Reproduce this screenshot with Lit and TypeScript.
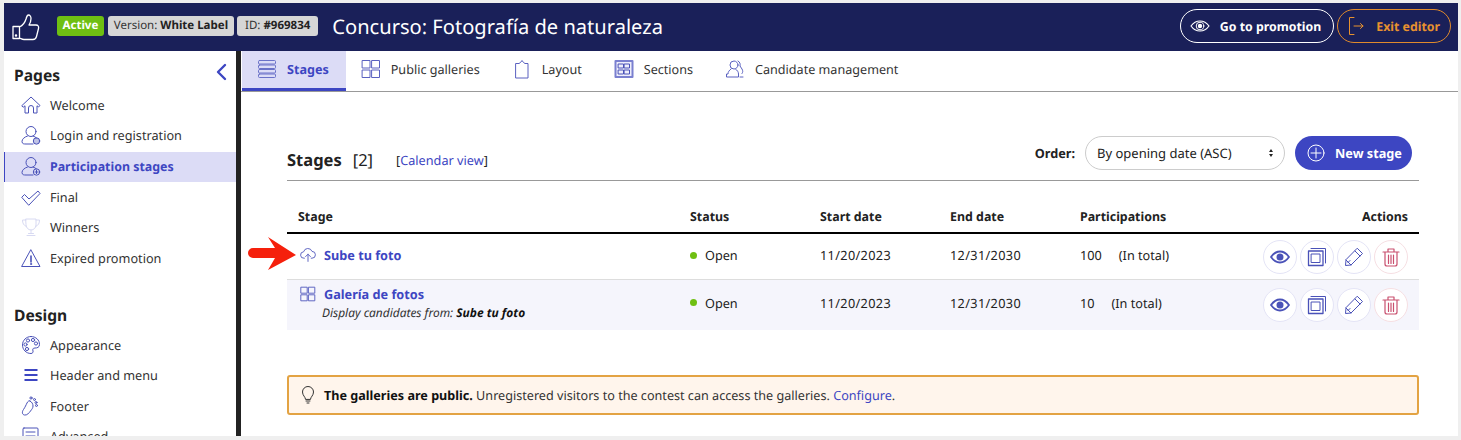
import { LitElement, html, css, svg } from "lit";
import { customElement } from "lit/decorators.js";

const ic = (w: number, h: number, c: string, body: unknown, sw = 1) => html`<svg class="ic" width=${w} height=${h} viewBox="0 0 ${w} ${h}" fill="none" stroke=${c} stroke-width=${sw} stroke-linecap="round" stroke-linejoin="round">${body}</svg>`;
const B = "#4a52b8";

const icons: Record<string, unknown> = {
  home: ic(20, 20, B, svg`<path d="M1 10.500 10 2l9 8.500-1.500 1.500-1.500-1.200V18h-3.500v-5a2.500 2.500 0 0 0-5 0v5H4v-7.200L2.500 12z"/>`),
  login: ic(20, 20, B, svg`<circle cx="10" cy="6.500" r="5"/><path d="M6.500 11C3.500 12 1 14 1 16.500S3 19 5 19h7"/><path d="M12 11c1.500.5 2.500 1 3.500 2"/><circle cx="15.500" cy="16" r="3.200" fill=${B} fill-opacity=".35"/>`),
  part: ic(20, 20, B, svg`<circle cx="10" cy="6.500" r="5"/><path d="M6.500 11C3.500 12 1 14 1 16.500S3 19 5 19h7"/><path d="M12 11c1.500.5 2.500 1 3.500 2"/><circle cx="15.500" cy="16" r="3.200"/><path d="M15.500 14.400v3.200M13.900 16h3.200"/>`),
  final: ic(20, 20, B, svg`<path d="M1 10 3.500 7.500 8 12l9-8 2 2.500L8 18z"/>`),
  trophy: ic(20, 20, "#d8daf2", svg`<path d="M5 2h10v6a5 5 0 0 1-10 0zM5 3H1.500c0 3 1 5.500 4 6.500M15 3h3.500c0 3-1 5.500-4 6.500M10 13v3M6 18.500h8M7.500 16.500h5"/>`),
  warn: ic(20, 20, B, svg`<path d="M10 2 19 18.500H1z"/><path d="M10 8v6" stroke-width="1.600"/><circle cx="10" cy="16" r=".6"/>`),
  palette: ic(20, 20, B, svg`<path d="M10 1.500c5 0 8.500 3.500 8.500 8 0 3-2.500 3.500-4.500 3.500-2.500 0-2.500 1.500-2 3 .4 1.200-.5 2.500-2 2.500C5 18.500 1.500 14.500 1.500 10S5 1.500 10 1.500z"/><circle cx="7" cy="5.500" r="1.600"/><circle cx="12" cy="5" r="1.600"/><circle cx="15" cy="8.500" r="1.600"/><circle cx="4.500" cy="9.500" r="1.600"/><circle cx="6" cy="14" r="1.600"/>`),
  menu: ic(20, 20, "#3d46c2", svg`<path d="M3.500 5h13M3.500 10h13M3.500 15h13" stroke-width="2" stroke-linecap="butt"/>`),
  foot: ic(20, 20, B, svg`<path d="M9 5c2 1 3 3 3 5 0 2-1 3-2.500 5S6 19.500 3.500 19 .8 16 2.500 13.500 5 9 6 7s2-2.500 3-2z"/><circle cx="10" cy="2" r="1.100"/><circle cx="13.500" cy="3.500" r="1"/><circle cx="15" cy="6.500" r="1"/><circle cx="15.500" cy="9.500" r="1"/>`),
  adv: ic(20, 20, B, svg`<rect x="2" y="2" width="15" height="16" rx="1"/><path d="M5 6h9M5 10h9"/>`),
  stack: ic(20, 20, "#6a71c8", svg`<rect x="1.500" y="1.500" width="17" height="3.500" rx="1"/><rect x="1.500" y="6" width="17" height="3.500" rx="1"/><rect x="1.500" y="10.500" width="17" height="3.500" rx="1"/><rect x="1.500" y="15" width="17" height="3.500" rx="1"/>`),
  grid: ic(20, 20, "#5a61c0", svg`<rect x="1.500" y="1.500" width="7.500" height="7.500"/><rect x="11" y="1.500" width="7.500" height="7.500"/><rect x="1.500" y="11" width="7.500" height="7.500"/><rect x="11" y="11" width="7.500" height="7.500"/>`),
  layout: ic(20, 20, "#5a61c0", svg`<path d="M4 4.500h3l1.500-1L10 1.500l1.500 2 1.500 1h3V19H4z"/>`),
  sections: ic(20, 20, "#7a80d0", svg`<rect x="1.500" y="2" width="17" height="16" stroke-width="2" fill="#eeeefb"/><rect x="4.500" y="5" width="5" height="4" stroke=${B}/><rect x="10.500" y="5" width="5" height="4" stroke=${B}/><rect x="4.500" y="11" width="5" height="4" stroke=${B}/><rect x="10.500" y="11" width="5" height="4" stroke=${B}/>`),
  cand: ic(20, 20, "#5a61c0", svg`<circle cx="9" cy="6" r="4"/><path d="M6 10c-2 1.500-3 3-3 5H1.500v3h12v-3c0-2-1-3.500-3-5"/><path d="M13 2c2 1 2.500 3 2 5l2 3c1 2 1 3 0 4.500M15 18h3"/>`),
  eye: ic(20, 14, B, svg`<path d="M1 7c2.500-3.500 5.500-5.500 9-5.500S16.500 3.500 19 7c-2.500 3.500-5.500 5.500-9 5.500S3.500 10.500 1 7z" stroke-width="1.800"/><circle cx="10" cy="7" r="3.500" fill=${B} stroke="none"/>`),
  copy: ic(20, 20, B, svg`<rect x="1.500" y="4" width="14.500" height="14.500" stroke-width="1.300"/><rect x="4.500" y="7" width="8.500" height="8.500"/><path d="M4 1.500h14.500V16"/>`),
  pencil: ic(20, 20, B, svg`<path d="M13.500 1.500 18.500 6.500 7 18 1.500 18.500 2 13z"/><path d="M11 4l5 5M2 13l5 5M4 15.500l2-2"/>`),
  trash: ic(20, 20, "#c9506f", svg`<path d="M2 5h16M7 5V2h6v3M4 5v12c0 1 .5 2 2 2h8c1.500 0 2-1 2-2V5M7.500 8v8.500M10 8v8.500M12.500 8v8.500"/>`, 1.200),
};

const pages = [["home", "Welcome"], ["login", "Login and registration"], ["part", "Participation stages", 1], ["final", "Final"], ["trophy", "Winners"], ["warn", "Expired promotion"]] as const;
const design = [["palette", "Appearance"], ["menu", "Header and menu"], ["foot", "Footer"], ["adv", "Advanced"]] as const;
const tabs = [["stack", "Stages", 1], ["grid", "Public galleries"], ["layout", "Layout"], ["sections", "Sections"], ["cand", "Candidate management"]] as const;

@customElement("app-root")
export class AppRoot extends LitElement {
  static styles = css`
    :host { display: block; width: 1461px; height: 440px; overflow: hidden; background: #efefef; font-family: "Noto Sans", sans-serif; font-size: 12.700px; color: #222; text-rendering: geometricPrecision; }
    * { box-sizing: border-box; }
    .ic { display: block; flex: none; }
    .frame { padding: 3px 3px 4px 4px; height: 440px; display: flex; flex-direction: column; }
    header { height: 48px; flex: none; background: #1a2059; display: flex; align-items: center; padding: 0 7px 2px 8px; color: #fff; }
    .thumb { margin: 3px 17px 0 0; }
    .badge { height: 20px; line-height: 20px; border-radius: 3px; padding: 0 6px; font-size: 11.500px; background: #d6d6d6; color: #333; margin-right: 3px; white-space: nowrap; }
    .badge b { color: #222; font-weight: 700; }
    .badge.on { background: #6fbf12; color: #fff; font-weight: 700; padding: 0 5.500px; margin-right: 4px; }
    .badge.id { padding: 0 8px; }
    h1 { margin: 0 0 0 11px; font-size: 20.100px; font-weight: 400; flex: 1; white-space: nowrap; }
    .pill { height: 34px; border-radius: 17px; border: 1px solid #fff; display: flex; align-items: center; gap: 10px; padding: 0 12px 0 9px; font-size: 12.350px; font-weight: 700; margin-left: 3px; white-space: nowrap; }
    .pill.exit { border-color: #e08a2c; color: #e8922f; padding: 0 10px 0 10px; gap: 12px; }
    .body { flex: 1; display: flex; min-height: 0; background: #fff; }
    aside { width: 232px; flex: none; overflow: hidden; padding-top: 13px; }
    .side-top { display: flex; justify-content: space-between; align-items: center; padding: 0 9px 0 10px; }
    .chev { margin-top: -6px; }
    h2 { margin: 0; font-size: 15.600px; font-weight: 700; line-height: 22px; color: #222; }
    .item { height: 30.600px; display: flex; align-items: center; gap: 9px; padding: 0 0 2px 17px; color: #333; white-space: nowrap; }
    .item.on { background: #dcdcf6; border-left: 1px solid #3d46c2; padding-left: 16px; color: #3d46c2; font-weight: 700; font-size: 12.400px; }
    .sec { margin: 29.500px 0 0 10px; }
    .list { margin-top: 4.600px; }
    .sep { width: 5px; background: #222; flex: none; }
    main { flex: 1; min-width: 0; }
    nav { height: 41px; display: flex; border-bottom: 1px solid #999; padding-left: 1px; }
    .tab { height: 40px; display: flex; align-items: center; gap: 10px; padding: 0 17px 4px 15px; white-space: nowrap; color: #333; font-size: 12.600px; }
    .tab.on { background: #dcdcf6; border-bottom: 3px solid #3d46c2; padding-bottom: 1px; color: #3d46c2; font-weight: 700; }
    .content { padding: 44px 39px 0 46px; }
    .head { height: 45px; display: flex; align-items: flex-start; border-bottom: 1px solid #999; padding-bottom: 9px; }
    .title, .count, .cal { align-self: flex-end; line-height: 22px; }
    .title { font-size: 16.500px; font-weight: 700; }
    .count { font-size: 16.500px; margin-left: 11px; }
    .cal { margin-left: 23px; }
    .cal a, .cfg { color: #3d46c2; }
    .spacer { flex: 1; }
    .order { font-weight: 700; line-height: 34px; margin-right: 10px; }
    .select { width: 200px; height: 34px; border: 1px solid #ccc; border-radius: 17px; display: flex; align-items: center; justify-content: space-between; padding: 0 11px; margin-right: 10px; white-space: nowrap; font-size: 13px; }
    .arrows { display: flex; flex-direction: column; gap: 2px; }
    .arrows i { display: block; width: 0; height: 0; border-left: 2.500px solid transparent; border-right: 2.500px solid transparent; }
    .arrows i:first-child { border-bottom: 3px solid #222; }
    .arrows i:last-child { border-top: 3px solid #222; }
    .new { width: 117px; height: 34px; border-radius: 17px; background: #3d46c2; color: #fff; font-weight: 700; display: flex; align-items: center; gap: 10px; padding: 0 12px; margin-right: 7px; white-space: nowrap; }
    .row { display: grid; grid-template-columns: 392px 130px 130px 130px 1fr auto; align-items: center; padding: 0 11px; position: relative; }
    .th { height: 53px; padding-top: 20px; border-bottom: 2px solid #000; font-weight: 700; color: #222; font-size: 12.400px; }
    .th .act { text-align: right; }
    .r1 { height: 46px; border-bottom: 1px solid #ddd; }
    .r2 { height: 50px; background: #f5f5fc; }
    .t { margin-bottom: 3px; }
    .r2 .t { margin-bottom: 5px; }
    .d { letter-spacing: .35px; }
    .name { display: flex; align-items: center; gap: 8px; color: #3d46c2; font-weight: 700; line-height: 18px; padding-left: 2px; margin-bottom: 3px; }
    .nm { display: flex; flex-direction: column; margin-bottom: 4px; }
    .nm .name { margin-bottom: 0; }
    .sub { font-size: 11.950px; line-height: 19px; font-style: italic; color: #333; margin-left: 24px; white-space: nowrap; }
    .sub b { color: #111; }
    .st { display: flex; align-items: center; gap: 8px; }
    .dot { width: 7px; height: 7px; border-radius: 50%; background: #6fbf12; }
    .tot { display: flex; gap: 17px; }
    .acts { display: flex; gap: 3px; }
    .c { width: 34px; height: 34px; border-radius: 50%; border: 1px solid #e4e4f6; background: #fff; display: flex; align-items: center; justify-content: center; }
    .c.del { border-color: #f6dfe3; }
    .arrow { position: absolute; left: -39px; top: 3px; }
    .alert { margin-top: 45px; height: 40px; border: 2px solid #e3a343; border-radius: 3px; background: #fff5ec; display: flex; align-items: center; gap: 9px; padding-left: 12px; color: #333; font-size: 12.620px; }
    .alert b { color: #111; }
  `;

  private item(i: readonly [string, string, number?]) {
    return html`<div class="item ${i[2] ? "on" : ""}">${icons[i[0]]}<span>${i[1]}</span></div>`;
  }

  private actions() {
    return html`<div class="acts"><div class="c">${icons.eye}</div><div class="c">${icons.copy}</div><div class="c">${icons.pencil}</div><div class="c del">${icons.trash}</div></div>`;
  }

  render() {
    const small = (c: unknown) => html`<svg class="ic" width="16" height="16" viewBox="0 0 20 20" fill="none" stroke="#5a61c0" stroke-width="1.200" stroke-linecap="round" stroke-linejoin="round">${c}</svg>`;
    return html`<div class="frame">
      <header>
        <div class="thumb">${ic(28, 28, "#fff", svg`<path d="M1 12.500h6.500v12H1zM7.500 13c3-1.500 5.500-4.500 6.500-8 .5-2 1-4 2.500-4s2.500 2 2.500 3.500c0 2.500-1 5-2 6.500h7c2 0 3 1.500 2.500 3.500l-2 8c-.5 2-1.500 3-3.500 3H12c-2 0-3-1-4.500-1.500"/><circle cx="4" cy="21.500" r=".6" fill="#fff"/>`, 1.300)}</div>
        <span class="badge on">Active</span>
        <span class="badge">Version: <b>White Label</b></span>
        <span class="badge id">ID: <b>#969834</b></span>
        <h1>Concurso: Fotografía de naturaleza</h1>
        <div class="pill">${ic(20, 14, "#fff", svg`<path d="M1 7c2.500-3.500 5.500-5 9-5s6.500 1.500 9 5c-2.500 3.500-5.500 5-9 5S3.500 10.500 1 7z" stroke-width="1.200"/><circle cx="10" cy="7" r="3.800" stroke-width="1"/><circle cx="10" cy="7" r="2.200" fill="#fff" stroke="none"/>`)}<span>Go to promotion</span></div>
        <div class="pill exit">${ic(16, 20, "#e8922f", svg`<path d="M6 1.500H1.500v17H6M6 10h9M12.500 7.500 15 10l-2.500 2.500"/>`)}<span>Exit editor</span></div>
      </header>
      <div class="body">
        <aside>
          <div class="side-top"><h2>Pages</h2><span class="chev">${ic(12, 18, "#3d46c2", svg`<path d="M10 2 3 9l7 7"/>`, 2.400)}</span></div>
          <div class="list">${pages.map((p) => this.item(p))}</div>
          <h2 class="sec">Design</h2>
          <div class="list">${design.map((p) => this.item(p))}</div>
        </aside>
        <div class="sep"></div>
        <main>
          <nav>${tabs.map((t) => html`<div class="tab ${t[2] ? "on" : ""}">${icons[t[0]]}<span>${t[1]}</span></div>`)}</nav>
          <div class="content">
            <div class="head">
              <span class="title">Stages</span><span class="count">[2]</span>
              <span class="cal">[<a>Calendar view</a>]</span>
              <span class="spacer"></span>
              <span class="order">Order:</span>
              <div class="select"><span>By opening date (ASC)</span><span class="arrows"><i></i><i></i></span></div>
              <div class="new">${ic(18, 18, "#fff", svg`<circle cx="9" cy="9" r="8"/><path d="M9 4v10M4 9h10"/>`)}<span>New stage</span></div>
            </div>
            <div class="row th"><span>Stage</span><span>Status</span><span>Start date</span><span>End date</span><span>Participations</span><span class="act">Actions</span></div>
            <div class="row r1">
              <div class="name">${small(svg`<path d="M5.500 14H5a4 4 0 0 1-.5-8 5.500 5.500 0 0 1 10.500-.5 4.200 4.200 0 0 1 0 8.500h-1"/><path d="M10 18V9M7 12l3-3 3 3"/>`)}<span>Sube tu foto</span></div>
              <div class="st t"><i class="dot"></i>Open</div><span class="t d">11/20/2023</span><span class="t d">12/31/2030</span>
              <div class="tot t"><span>100</span><span>(In total)</span></div>${this.actions()}
              <svg class="arrow" width="48" height="33" viewBox="0 0 48 33"><path d="M5 11H27L20 0 48 18 20 33 27 21H5a5 5 0 0 1 0-10z" fill="#f5200c"/></svg>
            </div>
            <div class="row r2">
              <div class="nm"><div class="name">${small(svg`<rect x="1.500" y="1.500" width="7.500" height="7.500"/><rect x="11" y="1.500" width="7.500" height="7.500"/><rect x="1.500" y="11" width="7.500" height="7.500"/><rect x="11" y="11" width="7.500" height="7.500"/>`)}<span>Galería de fotos</span></div>
              <div class="sub">Display candidates from: <b>Sube tu foto</b></div></div>
              <div class="st t"><i class="dot"></i>Open</div><span class="t d">11/20/2023</span><span class="t d">12/31/2030</span>
              <div class="tot t"><span>10</span><span>(In total)</span></div>${this.actions()}
            </div>
            <div class="alert">${ic(14, 20, "#333", svg`<path d="M4.500 14c0-2-3-3.500-3-7a5.500 5.500 0 0 1 11 0c0 3.500-3 5-3 7zM5 16h4M6 18h2"/>`)}<span><b>The galleries are public.</b> Unregistered visitors to the contest can access the galleries. <a class="cfg">Configure</a>.</span></div>
          </div>
        </main>
      </div>
    </div>`;
  }
}
